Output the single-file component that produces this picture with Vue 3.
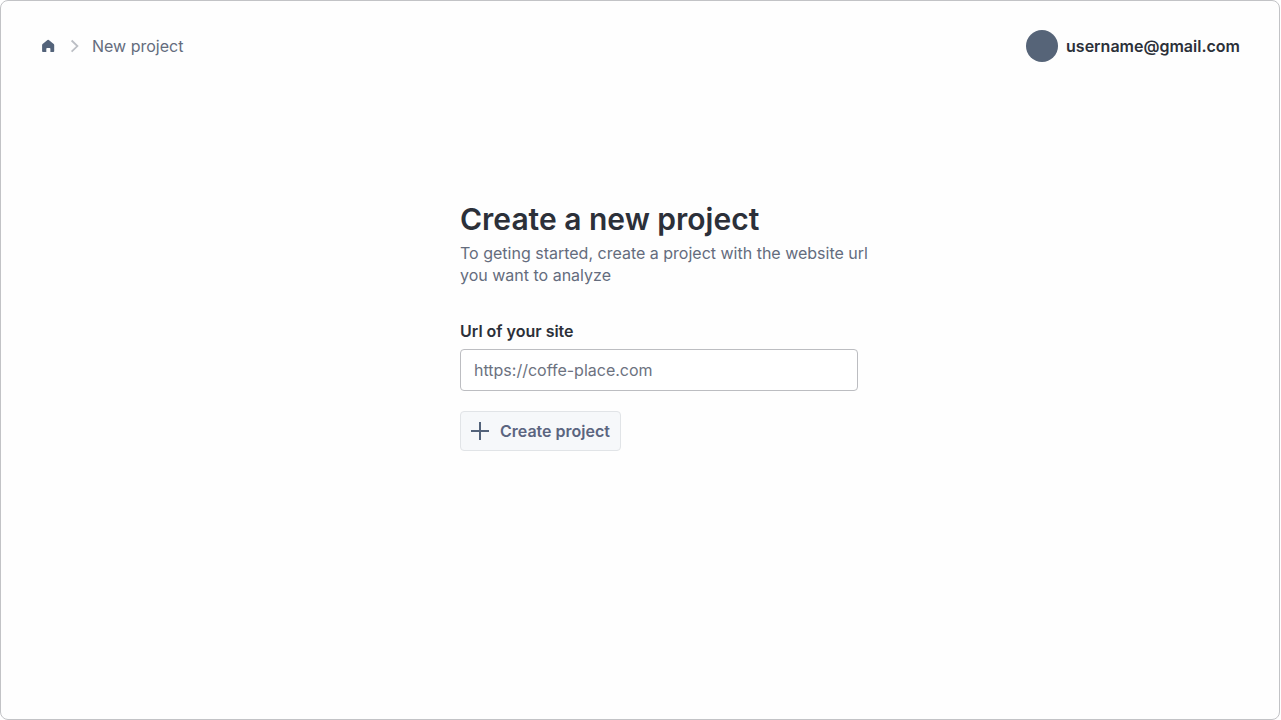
<script setup>
import { ref } from 'vue'

const url = ref('')
</script>

<template>
  <div class="page">
    <header class="topbar">
      <nav class="crumbs" aria-label="Breadcrumb">
        <a class="home" href="#" aria-label="Home">
          <svg width="16" height="16" viewBox="0 0 16 16" aria-hidden="true">
            <path
              d="M7.5 1.9a1.1 1.1 0 0 1 1.3 0l4.9 4.1c.3.3.5.6.5 1v6.2c0 .5-.3.8-.8.8H10.400v-3.200c0-.5-.3-.8-.8-.8H7.100c-.5 0-.8.3-.8.800V14H2.900c-.5 0-.8-.3-.8-.8V7c0-.4.2-.7.5-1z"
              fill="#53637a"
            />
          </svg>
        </a>
        <svg class="chevron" width="12" height="16" viewBox="0 0 12 16" aria-hidden="true">
          <path d="M3.600 2.500 9.400 8.100 3.600 13.700" fill="none" stroke="#bcbfc5" stroke-width="1.800" />
        </svg>
        <span class="current" aria-current="page">New project</span>
      </nav>
      <div class="account">
        <span class="avatar"></span>
        <span class="email">username@gmail.com</span>
      </div>
    </header>

    <main class="content">
      <h1>Create a new project</h1>
      <p class="intro">To geting started, create a project with the website url you want to analyze</p>
      <form class="form" @submit.prevent>
        <label for="site-url">Url of your site</label>
        <input id="site-url" v-model="url" type="text" placeholder="https://coffe-place.com" />
        <button type="submit">
          <svg width="20" height="20" viewBox="0 0 20 20" aria-hidden="true">
            <path d="M10 1v18M1 10h18" fill="none" stroke="#53637a" stroke-width="2" />
          </svg>
          Create project
        </button>
      </form>
    </main>
  </div>
</template>

<style>
body {
  background: #fff;
}
</style>

<style scoped>
.page {
  box-sizing: border-box;
  min-height: 100vh;
  margin-right: 1px;
  border: 1px solid #c2c3c6;
  border-radius: 8px;
  background: #fefefe;
  color: #2c3039;
  font-family: Inter, "Liberation Sans", sans-serif;
  font-size: 16px;
  line-height: 22px;
}

.topbar {
  display: flex;
  align-items: center;
  justify-content: space-between;
  padding: 29px 39px 0;
}

.crumbs {
  display: flex;
  align-items: center;
}

.home,
.chevron {
  display: block;
}

.home {
  height: 16px;
}

.home svg {
  display: block;
}

.chevron {
  margin: 0 12px;
}

.current,
.intro {
  color: #646c7d;
}

.account {
  display: flex;
  align-items: center;
  gap: 8px;
}

.avatar {
  width: 32px;
  height: 32px;
  border-radius: 50%;
  background: #566478;
}

.email {
  font-weight: 600;
}

.content {
  box-sizing: border-box;
  max-width: 480px;
  margin: 138px auto 0;
  padding-left: 60px;
}

h1 {
  margin: 0;
  font-size: 30px;
  font-weight: 600;
  line-height: 38px;
}

.intro {
  margin: 4px 0 0;
}

.form {
  display: flex;
  flex-direction: column;
  align-items: flex-start;
  margin-top: 34px;
}

label {
  font-weight: 600;
}

input {
  box-sizing: border-box;
  width: 100%;
  max-width: 398px;
  height: 42px;
  margin: 7px 0 0;
  padding: 0 13px;
  border: 1px solid #bcbdc1;
  border-radius: 4px;
  background: #fff;
  color: #2c3039;
  font: inherit;
}

input::placeholder {
  color: #6c7280;
  opacity: 1;
}

button {
  display: flex;
  align-items: center;
  gap: 10px;
  height: 40px;
  margin: 20px 0 0;
  padding: 0 10px 0 9px;
  border: 1px solid #e1e4e7;
  border-radius: 4px;
  background: #f6f8fa;
  color: #5b6580;
  font: inherit;
  font-weight: 600;
}
</style>
